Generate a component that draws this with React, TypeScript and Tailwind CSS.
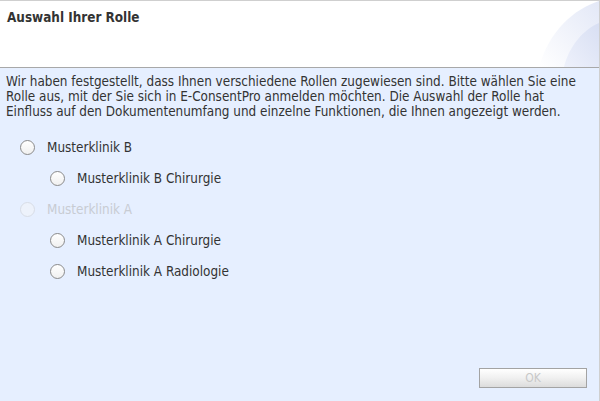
import React from 'react';

const ROLES = [
  { id: 'b', label: 'Musterklinik B', level: 0, disabled: false },
  { id: 'b-chir', label: 'Musterklinik B Chirurgie', level: 1, disabled: false },
  { id: 'a', label: 'Musterklinik A', level: 0, disabled: true },
  { id: 'a-chir', label: 'Musterklinik A Chirurgie', level: 1, disabled: false },
  { id: 'a-rad', label: 'Musterklinik A Radiologie', level: 1, disabled: false },
];

const Radio: React.FC<{ disabled?: boolean }> = ({ disabled }) => (
  <span
    className={`w-[15px] h-[15px] rounded-full border shrink-0 ${
      disabled ? 'border-[#d8dde6] bg-[#edf2fb]' : 'border-[#8a8a8a] bg-gradient-to-b from-white to-[#f0f0f0]'
    }`}
  />
);

const App: React.FC = () => {
  return (
    <div
      className="w-[600px] h-[401px] flex flex-col bg-[#e6efff] border-t border-r border-[#cfcfcf] text-[13.4px] leading-[16px] text-[#333]"
      style={{ fontFamily: "Tahoma, 'DejaVu Sans Condensed', 'DejaVu Sans', sans-serif" }}
    >
      <div className="relative h-[67px] shrink-0 bg-white border-b border-[#a8a8a8] overflow-hidden">
        <svg className="absolute right-0 top-0" width="90" height="66" viewBox="0 0 90 66">
          <defs>
            <linearGradient id="sw1" x1="0" y1="1" x2="1" y2="0">
              <stop offset="0" stopColor="#ffffff" />
              <stop offset="1" stopColor="#e3e8f7" />
            </linearGradient>
            <linearGradient id="sw2" x1="0" y1="1" x2="1" y2="0">
              <stop offset="0" stopColor="#eef1fb" />
              <stop offset="1" stopColor="#d8dff3" />
            </linearGradient>
          </defs>
          <path d="M30 66 C 40 30, 65 8, 90 0 L 90 66 Z" fill="url(#sw1)" />
          <path d="M55 66 C 60 45, 75 28, 90 22 L 90 66 Z" fill="url(#sw2)" />
        </svg>
        <h1 className="relative pl-[7px] pt-[9px] text-[13.4px] leading-[16px] font-bold text-[#333]">Auswahl Ihrer Rolle</h1>
      </div>

      <div className="flex-1 flex flex-col px-[6px] pt-[6px]">
        <p className="leading-[15px]">
          Wir haben festgestellt, dass Ihnen verschiedene Rollen zugewiesen sind. Bitte wählen Sie eine Rolle aus,
          mit der Sie sich in E-ConsentPro anmelden möchten. Die Auswahl der Rolle hat Einfluss auf den
          Dokumentenumfang und einzelne Funktionen, die Ihnen angezeigt werden.
        </p>

        <div className="flex flex-col mt-[13px]">
          {ROLES.map(role => (
            <label
              key={role.id}
              className={`h-[31px] flex items-center gap-[12px] ${role.level ? 'pl-[44px]' : 'pl-[14px]'} ${
                role.disabled ? 'text-[#c8ccd3]' : 'text-[#333]'
              }`}
            >
              <Radio disabled={role.disabled} />
              <span>{role.label}</span>
            </label>
          ))}
        </div>

        <div className="flex-1" />
        <div className="flex justify-end pr-[6px] pb-[13px]">
          <button
            disabled
            className="w-[108px] h-[20px] border border-[#a3a3a3] bg-gradient-to-b from-white via-[#f0f0f0] to-[#dcdcdc] text-[#c8c8c8] text-[12px]"
          >
            OK
          </button>
        </div>
      </div>
    </div>
  );
};

export default App;
